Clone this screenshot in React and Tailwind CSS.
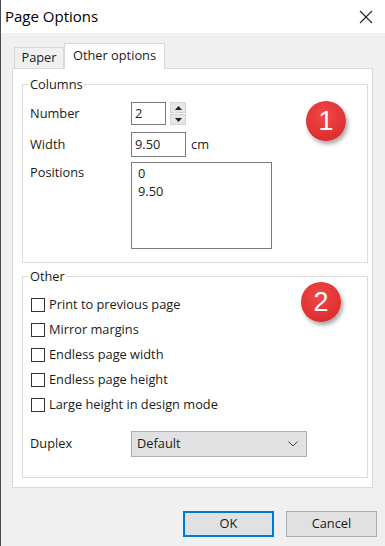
import React from "react";

function Badge({ n }) {
  return (
    <div className="w-[40px] h-[40px] rounded-full bg-[radial-gradient(circle_at_45%_35%,#f04848,#d82626)] shadow-[2px_3px_4px_rgba(0,0,0,0.35)] flex items-center justify-center text-white text-[27px] leading-none font-['Liberation_Sans',sans-serif]">
      {n}
    </div>
  );
}

function Check({ label }) {
  return (
    <div className="flex items-center h-[25px]">
      <div className="w-[14px] h-[14px] border border-[#333] bg-white ml-[8px] mr-[4px]" />
      <span>{label}</span>
    </div>
  );
}

export default function App() {
  return (
    <div className="w-[385px] h-[546px] bg-[#f0f0f0] border-l border-[#4a4a4a] flex flex-col font-['Open_Sans',sans-serif] text-[12.8px] text-[#1a1a1a] overflow-hidden">
      {/* title bar */}
      <div className="h-[33px] bg-white flex items-center justify-between pl-[4px] pr-[12px] shrink-0">
        <span className="text-[15px] text-black">Page Options</span>
        <svg width="14" height="14" viewBox="0 0 14 14">
          <path d="M1 1 L13 13 M13 1 L1 13" stroke="#222" strokeWidth="1.1" />
        </svg>
      </div>

      {/* tabs */}
      <div className="pl-[11px] pt-[10px] flex items-end h-[35px] shrink-0">
        <div className="ml-[2px] h-[21px] w-[50px] border border-b-0 border-[#d9d9d9] bg-[#f0f0f0] flex items-center justify-center">
          Paper
        </div>
        <div className="h-[26px] w-[101px] border border-b-0 border-[#d9d9d9] bg-white flex items-start justify-center pt-[2px] relative top-[1px] z-10">
          Other options
        </div>
      </div>

      {/* panel */}
      <div className="ml-[11px] w-[361px] h-[420px] bg-white border border-[#d9d9d9] relative shrink-0 pt-[7px] pl-[9px]">
        <fieldset className="w-[346px] h-[187px] border border-[#dcdcdc] relative">
          <legend className="ml-[6px] px-[1px] leading-[17px]">Columns</legend>
          <div className="flex flex-col pl-[7px] pt-[9px]">
            <div className="flex items-center h-[23px]">
              <span className="w-[101px]">Number</span>
              <div className="w-[35px] h-[23px] border border-[#7a7a7a] bg-white flex items-center pl-[3px]">2</div>
              <div className="ml-[4px] flex flex-col gap-[1px]">
                <div className="w-[16px] h-[11px] bg-[#e6e6e6] border border-[#d4d4d4] flex items-center justify-center">
                  <svg width="7" height="4" viewBox="0 0 7 4"><path d="M0 4 L3.5 0 L7 4Z" fill="#222" /></svg>
                </div>
                <div className="w-[16px] h-[11px] bg-[#e6e6e6] border border-[#d4d4d4] flex items-center justify-center">
                  <svg width="7" height="4" viewBox="0 0 7 4"><path d="M0 0 L3.5 4 L7 0Z" fill="#222" /></svg>
                </div>
              </div>
            </div>
            <div className="flex items-center h-[25px] mt-[7px]">
              <span className="w-[101px]">Width</span>
              <div className="w-[55px] h-[25px] border border-[#7a7a7a] bg-white flex items-center pl-[3px]">9.50</div>
              <span className="ml-[5px]">cm</span>
            </div>
            <div className="flex items-start mt-[5px]">
              <span className="w-[101px] leading-[20px]">Positions</span>
              <div className="w-[141px] h-[87px] border border-[#7a7a7a] bg-white pl-[6px] pt-[1px] leading-[18px]">
                <div>0</div>
                <div>9.50</div>
              </div>
            </div>
          </div>
        </fieldset>

        <fieldset className="w-[346px] h-[210px] border border-[#dcdcdc] mt-[5px] relative">
          <legend className="ml-[6px] px-[1px] leading-[17px]">Other</legend>
          <div className="flex flex-col pt-[7px]">
            <Check label="Print to previous page" />
            <Check label="Mirror margins" />
            <Check label="Endless page width" />
            <Check label="Endless page height" />
            <Check label="Large height in design mode" />
            <div className="flex items-center h-[26px] mt-[14px] pl-[7px]">
              <span className="w-[101px]">Duplex</span>
              <div className="w-[176px] h-[26px] bg-[#e1e1e1] border border-[#adadad] flex items-center justify-between pl-[5px] pr-[8px]">
                <span>Default</span>
                <svg width="10" height="6" viewBox="0 0 10 6">
                  <path d="M0.5 0.5 L5 5 L9.5 0.5" stroke="#444" strokeWidth="1" fill="none" />
                </svg>
              </div>
            </div>
          </div>
        </fieldset>

        <div className="absolute left-[293px] top-[32px]">
          <Badge n="1" />
        </div>
        <div className="absolute left-[288px] top-[213px]">
          <Badge n="2" />
        </div>
      </div>

      {/* buttons */}
      <div className="flex justify-end gap-[12px] pr-[8px] mt-[23px]">
        <div className="w-[91px] h-[26px] bg-[#e1e1e1] border-2 border-[#0078d7] flex items-center justify-center">OK</div>
        <div className="w-[91px] h-[26px] bg-[#e1e1e1] border border-[#adadad] flex items-center justify-center">Cancel</div>
      </div>
    </div>
  );
}
